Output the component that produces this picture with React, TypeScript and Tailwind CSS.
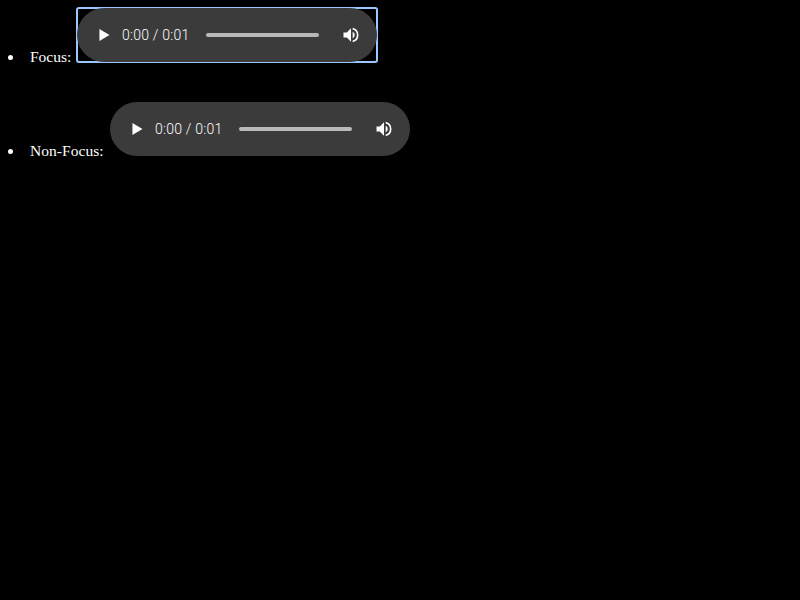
function Player({ focused = false }: { focused?: boolean }) {
  return (
    <div className={`h-[54px] w-[300px] shrink-0 ${focused ? 'rounded-[2px] outline-2 -outline-offset-1 outline-[#99c8ff]' : ''}`}>
      <div className="relative flex h-full w-full items-center rounded-full bg-[#3b3b3b] text-white">
        <svg className="ml-[16px] h-[22px] w-[22px] shrink-0" viewBox="0 0 24 24" fill="currentColor">
          <path d="M7 5.5v13l11-6.5z" />
        </svg>
        <div className="ml-[7px] w-[67px] shrink-0 whitespace-pre font-['Roboto','Liberation_Sans',sans-serif] text-sm font-light leading-5 tracking-[0.23px]">0:00 / 0:01</div>
        <div className="ml-[17px] h-1 w-[113px] shrink-0 rounded-full bg-[#b9b9b9]" />
        <svg className="ml-[22px] h-5 w-5 shrink-0" viewBox="0 0 24 24" fill="currentColor">
          <path d="M3 9v6h4l5 5V4L7 9H3zm13.5 3A4.5 4.5 0 0 0 14 7.97v8.05A4.47 4.47 0 0 0 16.5 12zM14 3.23v2.06a7 7 0 0 1 0 13.42v2.06a9 9 0 0 0 0-17.54z" />
        </svg>
      </div>
    </div>
  );
}

export default function App() {
  return (
    <ul className="flex h-screen w-screen flex-col gap-10 overflow-hidden bg-black pt-2 pl-2 font-['Liberation_Serif',serif] text-[15.5px] text-white">
      <li className="flex h-[54px] items-end">
        <span className="mb-[2px] h-[5px] w-[5px] shrink-0 rounded-full bg-white" />
        <span className="-mb-[2px] ml-[17px] w-[47px] shrink-0 leading-none">Focus:</span>
        <Player focused />
      </li>
      <li className="flex h-[54px] items-end">
        <span className="mb-[2px] h-[5px] w-[5px] shrink-0 rounded-full bg-white" />
        <span className="-mb-[2px] ml-[17px] w-[80px] shrink-0 leading-none tracking-[0.05px]">Non-Focus:</span>
        <Player />
      </li>
    </ul>
  );
}
